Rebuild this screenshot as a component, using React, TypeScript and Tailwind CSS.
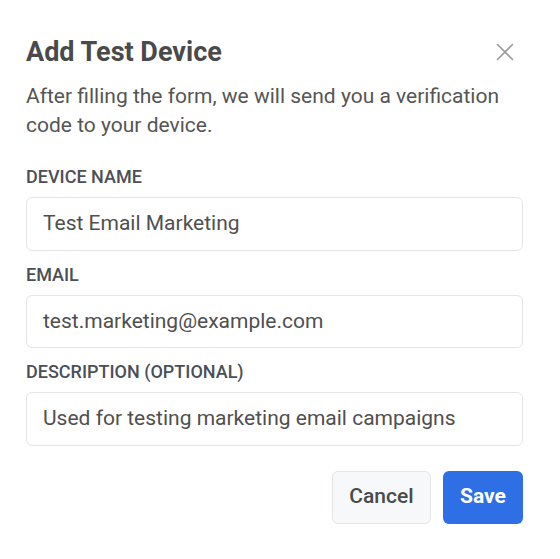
import React from "react";

function Field({ label, value }: { label: string; value: string }) {
  return (
    <div className="flex flex-col gap-[8px]">
      <label className="text-[18px] leading-[24px] font-medium text-[#4b4f56] uppercase">{label}</label>
      <div className="h-[53.5px] rounded-[6px] border border-[#e3e5e8] bg-white flex items-center px-[16px] text-[21px] text-[#4f4f4f]">
        {value}
      </div>
    </div>
  );
}

export default function App() {
  return (
    <div className="w-[560px] h-[559px] bg-white pl-[26px] pt-[32px] font-['Roboto',sans-serif]">
      <div className="w-[497px]">
        <div className="flex items-center justify-between">
          <h2 className="text-[27px] leading-[40px] font-bold text-[#4a4a4a]">Add Test Device</h2>
          <button className="w-[24px] h-[24px] flex items-center justify-center mr-[6px] text-[#9a9a9a]">
            <svg width="18" height="18" viewBox="0 0 18 18" fill="none" stroke="currentColor" strokeWidth="1.6" strokeLinecap="round">
              <path d="M1.5 1.5 L16.5 16.5 M16.5 1.5 L1.5 16.5" />
            </svg>
          </button>
        </div>
        <p className="mt-[10px] text-[21px] leading-[29px] text-[#555555]">
          After filling the form, we will send you a verification code to your device.
        </p>
        <div className="mt-[25px] flex flex-col gap-[12px]">
          <Field label="Device Name" value="Test Email Marketing" />
          <Field label="Email" value="test.marketing@example.com" />
          <Field label="Description (optional)" value="Used for testing marketing email campaigns" />
        </div>
        <div className="mt-[25px] flex justify-end gap-[12px]">
          <button className="h-[53px] w-[99px] rounded-[6px] border border-[#e3e5e8] bg-[#f7f8fa] text-[21px] font-medium text-[#4a4a4a]">
            Cancel
          </button>
          <button className="h-[53px] w-[80px] rounded-[6px] bg-[#2e6fe6] text-[21px] font-bold text-white">
            Save
          </button>
        </div>
      </div>
    </div>
  );
}
